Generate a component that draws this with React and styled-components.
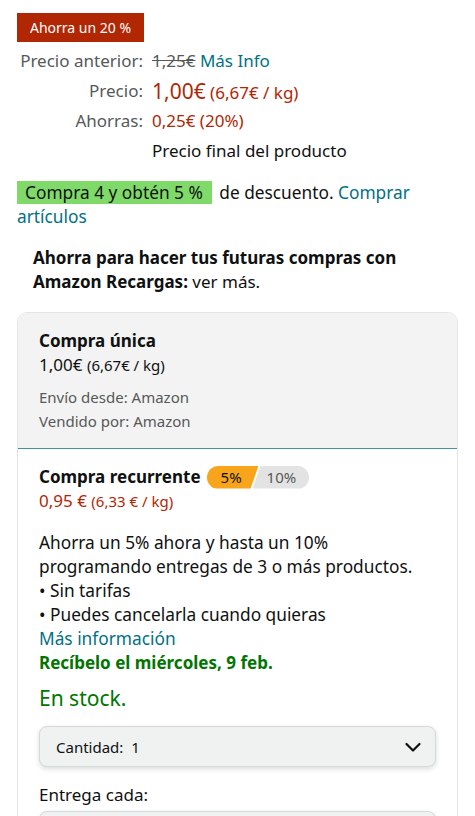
import React from "react";
import styled, { createGlobalStyle } from "styled-components";

const Global = createGlobalStyle`
  html, body { margin: 0; padding: 0; background: #fff; }
  body { font-family: "Noto Sans", "Open Sans", Arial, sans-serif; color: #0f1111; overflow: hidden; }
  * { box-sizing: border-box; }
`;

const Page = styled.div`
  padding: 13px 17px 0;
  width: 475px;
`;

const Badge = styled.div`
  display: inline-block;
  background: #b12704;
  color: #fff;
  font-size: 14px;
  line-height: 29px;
  padding: 0 13px;
`;

const PriceTable = styled.div`
  display: grid;
  grid-template-columns: 126px 1fr;
  grid-auto-rows: 30px;
  column-gap: 9px;
  margin-top: 4px;
  font-size: 17px;
  line-height: 30px;
`;

const Label = styled.div`
  text-align: right;
  color: #565959;
`;

const Value = styled.div`
  color: ${(p) => p.$color || "#0f1111"};
  white-space: nowrap;
`;

const Strike = styled.span`
  text-decoration: line-through;
  color: #565959;
`;

const Link = styled.a`
  color: #007185;
  text-decoration: none;
`;

const BigPrice = styled.span`
  font-size: 21px;
`;

const Promo = styled.p`
  margin: 15px 0 0;
  font-size: 17.3px;
  line-height: 24px;
`;

const Highlight = styled.span`
  display: inline-block;
  line-height: 23px;
  background: #7fda69;
  padding: 0 9px 0 8px;
  margin-right: 3px;
`;

const Recargas = styled.p`
  margin: 17px 0 0;
  padding-left: 16px;
  font-size: 17px;
  line-height: 24px;
`;

const Card = styled.div`
  margin-top: 18px;
  border: 1px solid #e3e6e6;
  border-radius: 10px 10px 0 0;
  overflow: hidden;
`;

const OneTime = styled.div`
  background: #f3f3f3;
  padding: 16px 21px 15px;
`;

const Title = styled.div`
  font-weight: 700;
  font-size: 17px;
  line-height: 24px;
  display: flex;
  align-items: center;
  gap: 6px;
`;

const PriceLine = styled.div`
  font-size: 17px;
  line-height: 24px;
  color: ${(p) => p.$color || "#0f1111"};
`;

const Small = styled.span`
  font-size: 15px;
`;

const Meta = styled.div`
  font-size: 15px;
  line-height: 24px;
  color: #565959;
  margin-top: ${(p) => p.$mt || 0}px;
`;

const Recurring = styled.div`
  border: 1px solid #3f959e;
  margin: 0 -1px;
  padding: 16px 21px 0;
`;

const Pill = styled.span`
  display: inline-flex;
  height: 23px;
  border-radius: 12px;
  overflow: hidden;
  font-weight: 400;
  font-size: 15px;
  line-height: 23px;
`;

const PillOn = styled.span`
  background: #f8a51c;
  color: #0f1111;
  padding: 0 17px 0 14px;
  clip-path: polygon(0 0, 100% 0, calc(100% - 8px) 100%, 0 100%);
`;

const PillOff = styled.span`
  background: #e3e3e3;
  color: #565959;
  padding: 0 13px 0 14px;
  margin-left: -6px;
  clip-path: polygon(8px 0, 100% 0, 100% 100%, 0 100%);
`;

const Body = styled.div`
  margin-top: 18px;
  font-size: 17.3px;
  line-height: 24px;
`;

const Green = styled.div`
  color: #007600;
  font-weight: ${(p) => (p.$bold ? 700 : 400)};
  font-size: ${(p) => p.$size || 17}px;
  line-height: ${(p) => p.$lh || 24}px;
  margin-top: ${(p) => p.$mt || 0}px;
`;

const Select = styled.div`
  margin-top: ${(p) => p.$mt || 0}px;
  height: 41px;
  background: #f0f2f2;
  border: 1px solid #d5d9d9;
  border-radius: 8px;
  box-shadow: 0 2px 5px rgba(15, 17, 17, 0.15);
  display: flex;
  align-items: center;
  justify-content: space-between;
  padding: 0 12px 0 16px;
  font-size: 15px;
  color: #0f1111;
`;

const FieldLabel = styled.div`
  margin-top: 16px;
  font-size: 17px;
  line-height: 24px;
`;

function Chevron() {
  return (
    <svg width="20" height="20" viewBox="0 0 20 20" fill="none">
      <path d="M3.5 7l6.5 6.5L16.5 7" stroke="#0f1111" strokeWidth="2.2" strokeLinecap="round" strokeLinejoin="round" />
    </svg>
  );
}

export default function App() {
  return (
    <Page>
      <Global />
      <Badge>Ahorra un 20 %</Badge>
      <PriceTable>
        <Label>Precio anterior:</Label>
        <Value>
          <Strike>1,25€</Strike> <Link>Más Info</Link>
        </Value>
        <Label>Precio:</Label>
        <Value $color="#b12704">
          <BigPrice>1,00€</BigPrice> (6,67€ / kg)
        </Value>
        <Label>Ahorras:</Label>
        <Value $color="#b12704">0,25€ (20%)</Value>
        <div />
        <Value>Precio final del producto</Value>
      </PriceTable>
      <Promo>
        <Highlight>Compra 4 y obtén 5 %</Highlight> de descuento.{" "}
        <Link>Comprar artículos</Link>
      </Promo>
      <Recargas>
        <b>Ahorra para hacer tus futuras compras con Amazon Recargas:</b> ver más.
      </Recargas>
      <Card>
        <OneTime>
          <Title>Compra única</Title>
          <PriceLine>
            1,00€ <Small>(6,67€ / kg)</Small>
          </PriceLine>
          <Meta $mt={8}>Envío desde: Amazon</Meta>
          <Meta>Vendido por: Amazon</Meta>
        </OneTime>
        <Recurring>
          <Title>
            Compra recurrente
            <Pill>
              <PillOn>5%</PillOn>
              <PillOff>10%</PillOff>
            </Pill>
          </Title>
          <PriceLine $color="#b12704">
            0,95 € <Small>(6,33 € / kg)</Small>
          </PriceLine>
          <Body>
            Ahorra un 5% ahora y hasta un 10% programando entregas de 3 o más productos.
            <br />• Sin tarifas
            <br />• Puedes cancelarla cuando quieras
            <br />
            <Link>Más información</Link>
          </Body>
          <Green $bold>Recíbelo el miércoles, 9 feb.</Green>
          <Green $size={21} $lh={30} $mt={8}>En stock.</Green>
          <Select $mt={13}>
            <span>Cantidad:&nbsp; 1</span>
            <Chevron />
          </Select>
          <FieldLabel>Entrega cada:</FieldLabel>
          <Select $mt={4} />
        </Recurring>
      </Card>
    </Page>
  );
}
